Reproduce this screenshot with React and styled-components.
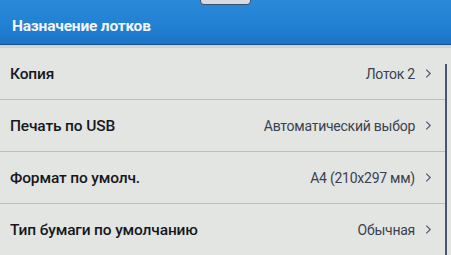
import React from "react"
import styled, { createGlobalStyle } from "styled-components"

const GlobalStyle = createGlobalStyle`
  html, body {
    margin: 0;
    padding: 0;
    width: 451px;
    height: 255px;
    overflow: hidden;
    background: #e3e5e2;
    font-family: Roboto, "Liberation Sans", sans-serif;
  }
`

const rows = [
  { label: "Копия", value: "Лоток 2" },
  { label: "Печать по USB", value: "Автоматический выбор" },
  { label: "Формат по умолч.", value: "A4 (210x297 мм)" },
  { label: "Тип бумаги по умолчанию", value: "Обычная" },
]

const App = () => (
  <Screen>
    <GlobalStyle />
    <Header>
      <Handle />
      <Title>Назначение лотков</Title>
    </Header>
    <Body>
      <List>
        {rows.map(r => (
          <Row key={r.label}>
            <Label>{r.label}</Label>
            <Value>{r.value}</Value>
            <Chevron viewBox="0 0 8 12">
              <path d="M1.5 1.5 L6 6 L1.5 10.5" />
            </Chevron>
          </Row>
        ))}
      </List>
      <Scrollbar />
    </Body>
  </Screen>
)

const Screen = styled.div`
  width: 451px;
  height: 255px;
  display: flex;
  flex-direction: column;
  overflow: hidden;
`

const Header = styled.div`
  position: relative;
  height: 44px;
  flex-shrink: 0;
  background: linear-gradient(180deg, #2a8ad8 0%, #2180d2 60%, #1b74c6 100%);
  border-bottom: 1px solid #1d4f86;
  display: flex;
  align-items: center;
  padding-left: 12px;
`

const Handle = styled.div`
  position: absolute;
  left: 200px;
  top: -3px;
  width: 49px;
  height: 6px;
  background: #d8dce2;
  border: 1.5px solid #3b4f6e;
  border-radius: 0 0 4px 4px;
`

const Title = styled.div`
  color: #f2f6fb;
  font-size: 15.5px;
  font-weight: 700;
  letter-spacing: -0.2px;
  margin-top: 7px;
`

const Body = styled.div`
  flex: 1;
  display: flex;
  border-top: 3px solid #cfd3d6;
`

const List = styled.div`
  flex: 1;
  display: flex;
  flex-direction: column;
`

const Row = styled.div`
  height: 51px;
  flex-shrink: 0;
  display: flex;
  align-items: center;
  padding: 0 13px 0 10px;
  border-bottom: 1px solid #b9bfc9;
`

const Label = styled.div`
  flex: 1;
  color: #15181d;
  font-size: 15.5px;
  font-weight: 500;
  letter-spacing: -0.15px;
  margin-top: 1px;
`

const Value = styled.div`
  color: #3a4150;
  font-size: 14px;
  letter-spacing: -0.25px;
  margin-right: 10px;
  margin-top: 1px;
`

const Chevron = styled.svg`
  width: 7px;
  height: 11px;
  fill: none;
  stroke: #4a5470;
  stroke-width: 1.3;
`

const Scrollbar = styled.div`
  width: 2px;
  margin: 16px 4px 0 0;
  background: #4a5675;
`

export default App
